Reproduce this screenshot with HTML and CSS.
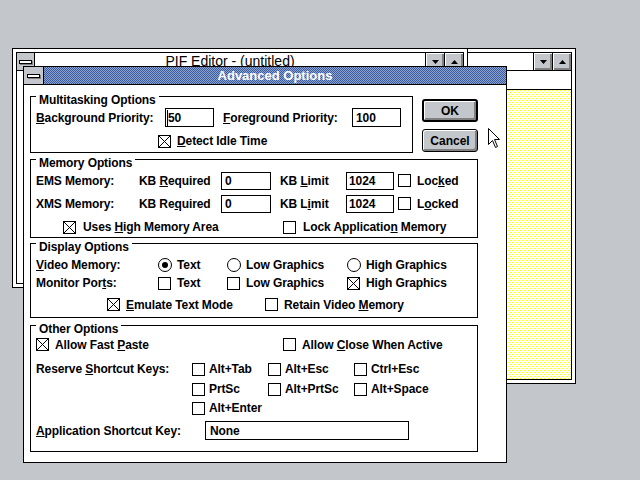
FILE: index.html
```html
<!DOCTYPE html>
<html>
<head>
<meta charset="utf-8">
<title>Advanced Options</title>
<link rel="stylesheet" href="styles.css">
</head>
<body>
<div class="desktop">

  <div class="win win2">
    <div class="frame">
      <div class="tbar">
        <span class="tspace"></span>
        <span class="tbtn"><svg width="7" height="4" viewBox="0 0 7 4"><polygon points="0,0 7,0 3.5,4" fill="#000"/></svg></span>
        <span class="tbtn"><svg width="7" height="4" viewBox="0 0 7 4"><polygon points="3.5,0 7,4 0,4" fill="#000"/></svg></span>
      </div>
      <div class="menubar"></div>
      <div class="yellow"></div>
    </div>
  </div>

  <div class="win pif">
    <div class="frame">
      <div class="tbar">
        <span class="sysbox"><span class="sysbar"></span></span>
        <span class="ttext">PIF Editor - (untitled)</span>
        <span class="tbtn"><svg width="7" height="4" viewBox="0 0 7 4"><polygon points="0,0 7,0 3.5,4" fill="#000"/></svg></span>
        <span class="tbtn"><svg width="7" height="4" viewBox="0 0 7 4"><polygon points="3.5,0 7,4 0,4" fill="#000"/></svg></span>
      </div>
      <div class="client"></div>
    </div>
  </div>

  <div class="dialog">
    <div class="dtitle">
      <span class="sysbox"><span class="sysbar"></span></span>
      <span class="dtext">Advanced Options</span>
    </div>
    <div class="dclient">
      <div class="top">
        <div class="grp g1">
          <div class="lg"><span>Multitasking Options</span></div>
          <div class="row h21">
            <span class="w129"><u>B</u>ackground Priority:</span>
            <span class="edit e49 pl1"><span class="caret"></span>50</span>
            <span class="w129 ml9"><u>F</u>oreground Priority:</span>
            <span class="edit e49">100</span>
          </div>
          <div class="row h18 mt4">
            <span class="it ml122"><span class="cb"><svg viewBox="0 0 11 11" shape-rendering="crispEdges"><path d="M0 0L11 11M11 0L0 11" stroke="#000" fill="none"/></svg></span><span class="cl"><u>D</u>etect Idle Time</span></span>
          </div>
        </div>
        <div class="btns">
          <div class="btn def">OK</div>
          <div class="btn cancel">Cancel</div>
        </div>
      </div>

      <div class="grp g2">
        <div class="lg"><span>Memory Options</span></div>
        <div class="row h19 mt1">
          <span class="w103">EMS Memory:</span>
          <span class="w82">KB <u>R</u>equired</span>
          <span class="edit e50">0</span>
          <span class="w66 ml9">KB <u>L</u>imit</span>
          <span class="edit e48 pl2">1024</span>
          <span class="it ml4"><span class="cb"></span><span class="cl">Loc<u>k</u>ed</span></span>
        </div>
        <div class="row h19 mt4">
          <span class="w103">XMS Memory:</span>
          <span class="w82">KB Re<u>q</u>uired</span>
          <span class="edit e50">0</span>
          <span class="w66 ml9">KB L<u>i</u>mit</span>
          <span class="edit e48 pl2">1024</span>
          <span class="it ml4"><span class="cb"></span><span class="cl">L<u>o</u>cked</span></span>
        </div>
        <div class="row h18 mt5">
          <span class="it w220 ml27"><span class="cb"><svg viewBox="0 0 11 11" shape-rendering="crispEdges"><path d="M0 0L11 11M11 0L0 11" stroke="#000" fill="none"/></svg></span><span class="cl g7">Uses <u>H</u>igh Memory Area</span></span>
          <span class="it"><span class="cb"></span><span class="cl g7">Lock Applicatio<u>n</u> Memory</span></span>
        </div>
      </div>

      <div class="grp g3">
        <div class="lg"><span>Display Options</span></div>
        <div class="row h20 mt1">
          <span class="w122"><u>V</u>ideo Memory:</span>
          <span class="it w69"><span class="rb on"></span><span class="cl">Text</span></span>
          <span class="it w120"><span class="rb"></span><span class="cl">Low Graphics</span></span>
          <span class="it"><span class="rb"></span><span class="cl">High Graphics</span></span>
        </div>
        <div class="row h16">
          <span class="w122">Monitor Por<u>t</u>s:</span>
          <span class="it w69"><span class="cb"></span><span class="cl">Text</span></span>
          <span class="it w120"><span class="cb"></span><span class="cl">Low Graphics</span></span>
          <span class="it"><span class="cb"><svg viewBox="0 0 11 11" shape-rendering="crispEdges"><path d="M0 0L11 11M11 0L0 11" stroke="#000" fill="none"/></svg></span><span class="cl">High Graphics</span></span>
        </div>
        <div class="row h17 mt5">
          <span class="it w158 ml71"><span class="cb"><svg viewBox="0 0 11 11" shape-rendering="crispEdges"><path d="M0 0L11 11M11 0L0 11" stroke="#000" fill="none"/></svg></span><span class="cl"><u>E</u>mulate Text Mode</span></span>
          <span class="it"><span class="cb"></span><span class="cl">Retain Video <u>M</u>emory</span></span>
        </div>
      </div>

      <div class="grp g4">
        <div class="lg"><span>Other Options</span></div>
        <div class="row h17">
          <span class="it w247"><span class="cb"><svg viewBox="0 0 11 11" shape-rendering="crispEdges"><path d="M0 0L11 11M11 0L0 11" stroke="#000" fill="none"/></svg></span><span class="cl">Allow Fast <u>P</u>aste</span></span>
          <span class="it"><span class="cb"></span><span class="cl">Allow <u>C</u>lose When Active</span></span>
        </div>
        <div class="row h18 mt7 keys">
          <span class="w156">Reserve <u>S</u>hortcut Keys:</span>
          <span class="it w76"><span class="cb"></span><span class="cl">Alt+Tab</span></span>
          <span class="it w86"><span class="cb"></span><span class="cl">Alt+Esc</span></span>
          <span class="it"><span class="cb"></span><span class="cl">Ctrl+Esc</span></span>
        </div>
        <div class="row h18 mt2 keys">
          <span class="w156"></span>
          <span class="it w76"><span class="cb"></span><span class="cl">PrtSc</span></span>
          <span class="it w86"><span class="cb"></span><span class="cl">Alt+PrtSc</span></span>
          <span class="it"><span class="cb"></span><span class="cl">Alt+Space</span></span>
        </div>
        <div class="row h18 mt1 keys">
          <span class="w156"></span>
          <span class="it w76"><span class="cb"></span><span class="cl">Alt+Enter</span></span>
        </div>
        <div class="row h19 mt4">
          <span class="w169"><u>A</u>pplication Shortcut Key:</span>
          <span class="edit e204 pl4">None</span>
        </div>
      </div>
    </div>
  </div>

  <svg class="cursor" width="13" height="21" viewBox="0 0 13 21">
    <path d="M0.5 0.5V16.5L4.5 12.5L7.5 19.5L9.5 18.5L6.5 11.5H11.5Z" fill="#fff" stroke="#000" stroke-linejoin="miter"/>
  </svg>
</div>
</body>
</html>
```

FILE: styles.css
```css
* { box-sizing: border-box; }
html, body { margin: 0; padding: 0; }
body {
  width: 640px;
  height: 480px;
  overflow: hidden;
  background: #c3c7cb;
  font-family: "Liberation Sans", Arial, sans-serif;
  font-size: 12px;
  font-weight: bold;
  color: #000;
  letter-spacing: -0.1px;
}
.desktop { position: relative; width: 640px; height: 480px; }

/* background windows */
.win {
  position: absolute;
  border: 1px solid #000;
  background: #fff;
  padding: 3px;
}
.pif { left: 12px; top: 48px; width: 456px; height: 240px; }
.win2 { left: 463px; top: 48px; width: 113px; height: 336px; }
.frame {
  height: 100%;
  border: 1px solid #000;
  display: flex;
  flex-direction: column;
  background: #fff;
}
.tbar {
  flex: none;
  height: 18px;
  display: flex;
  border-bottom: 1px solid #000;
  background: #fff;
}
.tspace { flex: 1; }
.sysbox {
  flex: none;
  width: 18px;
  height: 100%;
  background: #c3c7cb;
  border-right: 1px solid #000;
  display: flex;
  align-items: center;
  justify-content: center;
}
.sysbar {
  width: 13px;
  height: 4px;
  background: #fff;
  border: 1px solid #000;
  box-shadow: 1px 1px 0 #808080;
}
.ttext {
  flex: 1;
  text-align: center;
  font-weight: normal;
  font-size: 14px;
  line-height: 17px;
  letter-spacing: 0;
}
.tbtn {
  flex: none;
  width: 19px;
  height: 17px;
  border-left: 1px solid #000;
  background: #c3c7cb;
  box-shadow: inset 1px 1px 0 #fff, inset -1px -1px 0 #808080, inset -2px -2px 0 #808080;
  display: flex;
  align-items: center;
  justify-content: center;
}
.tbtn svg { display: block; }
.menubar { flex: none; height: 19px; border-bottom: 1px solid #000; }
.yellow {
  flex: 1;
  background-color: #fff;
  background-image:
    conic-gradient(from 270deg at 1px 1px, #ffff00 90deg, transparent 0),
    conic-gradient(from 270deg at 1px 1px, #ffff00 90deg, transparent 0);
  background-size: 4px 4px, 4px 4px;
  background-position: 0 0, 2px 2px;
}
.client { flex: 1; }

/* dialog */
.dialog {
  position: absolute;
  left: 23px;
  top: 66px;
  width: 484px;
  height: 397px;
  border: 1px solid #000;
  background: #fff;
}
.dtitle {
  height: 18px;
  display: flex;
  border-bottom: 1px solid #000;
}
.dtitle .sysbox { width: 20px; }
.dtext {
  flex: 1;
  text-align: center;
  color: #fff;
  font-size: 13px;
  line-height: 17px;
  letter-spacing: 0;
  background: repeating-conic-gradient(#3a5a9e 0 25%, #8fa3cf 0 50%) 0 0 / 2px 2px;
}
.dclient { padding: 11px 0 0 6px; }
.top { display: flex; }

.grp { border: 1px solid #000; padding-left: 5px; }
.g1 { width: 383px; height: 57px; }
.g2 { width: 448px; height: 79px; margin-top: 6px; }
.g3 { width: 448px; height: 75px; margin-top: 5px; }
.g4 { width: 448px; height: 127px; margin-top: 7px; }
.lg { height: 14px; margin-top: -4px; line-height: 14px; white-space: nowrap; }
.lg span { background: #fff; padding: 0 3px; }

.row { display: flex; align-items: center; line-height: 14px; white-space: nowrap; }
.h16 { height: 16px; }
.h17 { height: 17px; }
.h18 { height: 18px; }
.h19 { height: 19px; }
.h20 { height: 20px; }
.h21 { height: 21px; }
.mt1 { margin-top: 1px; }
.mt2 { margin-top: 2px; }
.mt4 { margin-top: 4px; }
.mt5 { margin-top: 5px; }
.mt7 { margin-top: 7px; }
.ml4 { margin-left: 4px; }
.ml9 { margin-left: 9px; }
.ml27 { margin-left: 27px; }
.ml71 { margin-left: 71px; }
.ml122 { margin-left: 122px; }

.w66 { width: 66px; flex: none; }
.w69 { width: 69px; flex: none; }
.w76 { width: 76px; flex: none; }
.w82 { width: 82px; flex: none; }
.w86 { width: 86px; flex: none; }
.w103 { width: 103px; flex: none; }
.w120 { width: 120px; flex: none; }
.w122 { width: 122px; flex: none; }
.w129 { width: 129px; flex: none; }
.w156 { width: 156px; flex: none; }
.w158 { width: 158px; flex: none; }
.w169 { width: 169px; flex: none; }
.w220 { width: 220px; flex: none; }
.w247 { width: 247px; flex: none; }

.edit {
  flex: none;
  border: 1px solid #000;
  background: #fff;
  padding-left: 3px;
  display: flex;
  align-items: center;
}
.e49 { width: 49px; height: 19px; }
.e50 { width: 50px; height: 18px; }
.e48 { width: 48px; height: 18px; }
.e204 { width: 204px; height: 19px; }
.pl1 { padding-left: 1px; }
.pl2 { padding-left: 2px; }
.pl4 { padding-left: 4px; }
.caret { width: 1px; height: 16px; background: #000; flex: none; }

.it { display: flex; align-items: center; flex: none; }
.cb {
  flex: none;
  display: block;
  width: 13px;
  height: 13px;
  border: 1px solid #000;
  background: #fff;
}
.cb svg { display: block; width: 11px; height: 11px; }
.rb {
  flex: none;
  width: 14px;
  height: 14px;
  border: 1px solid #000;
  border-radius: 50%;
  background: #fff;
  display: flex;
  align-items: center;
  justify-content: center;
}
.rb.on::after {
  content: "";
  width: 6px;
  height: 6px;
  border-radius: 50%;
  background: #000;
}
.cl { margin-left: 6px; }
.rb + .cl { margin-left: 5px; }
.cl.g7 { margin-left: 7px; }
.keys .cl { margin-left: 4px; }

.btns { margin-left: 9px; display: flex; flex-direction: column; }
.btn {
  width: 56px;
  height: 23px;
  border: 1px solid #000;
  border-radius: 3px;
  background: #c3c7cb;
  box-shadow: inset 1px 1px 0 #fff, inset -1px -1px 0 #808080, inset -2px -2px 0 #808080;
  display: flex;
  align-items: center;
  justify-content: center;
  letter-spacing: 0;
}
.btn.def { margin-top: 3px; border-width: 2px; }
.btn.cancel { margin-top: 7px; }

.cursor { position: absolute; left: 488px; top: 128px; }
```
